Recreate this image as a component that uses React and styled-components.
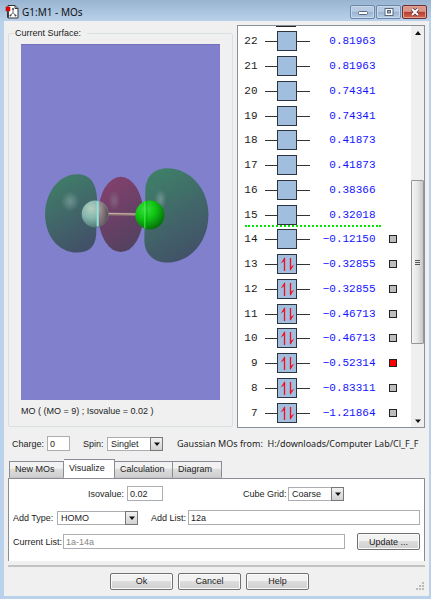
import React, { useState } from 'react';
import styled, { createGlobalStyle } from 'styled-components'

const GlobalStyle = createGlobalStyle`
  * { box-sizing:border-box; }
  body { margin:0; background:#b9d1ea; }
  body, button, input, select {
    font-family:"Liberation Sans", Arial, sans-serif;
    font-size:9px;
    line-height:12px;
    color:#1c1c1c;
  }
`

const Window = styled.div`
  min-height:100vh;
  display:flex;
  flex-direction:column;
  padding:0 2px 5px 4px;
  background:linear-gradient(#99b4d1, #b9d1ea 21px);
`

const TitleBar = styled.header`
  height:21px;
  display:flex;
  align-items:center;
  gap:3px;
  padding:2px 2px 0 1px;
  h1 {
    flex:1;
    margin:0;
    font:400 10px/14px "Noto Sans", "Open Sans", sans-serif;
    color:#111;
  }
`

const CaptionButton = styled.button`
  width:25px;
  height:14px;
  padding:0;
  display:flex;
  align-items:center;
  justify-content:center;
  border:1px solid ${({ $close }) => ($close ? '#6b2f38' : '#6d87a8')};
  border-radius:2px;
  box-shadow:inset 0 0 0 1px ${({ $close }) => ($close ? '#e2a093' : '#c9daec')};
  background:${({ $close }) => ($close
    ? 'linear-gradient(#d9978a 45%, #b9392a 50%, #cf6a50)'
    : 'linear-gradient(#b7cbe2 45%, #98b3d1 50%, #b3cae3)')};
`

const CaptionButtons = styled.div`
  display:flex;
  gap:1px;
`

const Body = styled.main`
  flex:1;
  display:flex;
  flex-direction:column;
  background:#f0f0f0;
  padding:4px 4px 6px;
`

const Top = styled.div`
  flex:1;
  display:grid;
  grid-template-columns:224fr 188fr;
  gap:4px;
`

const Surface = styled.fieldset`
  min-width:0;
  margin:2px 0 1px;
  padding:5px 12px 9px;
  display:flex;
  flex-direction:column;
  border:1px solid #d8e0e4;
  border-radius:2px;
  legend { padding:0 6px 0 1px; margin-left:-7px; }
  p { margin:5px 0 0; }
`

const Viewer = styled.svg`
  flex:1;
  width:100%;
  min-height:0;
  display:block;
  background:#8080cc;
  border-top:1px solid #7472b8;
`

const Diagram = styled.section`
  display:flex;
  border:1px solid #8a9099;
  background:#fff;
`

const Levels = styled.div`
  flex:1;
  display:flex;
  flex-direction:column;
  padding-bottom:2px;
`

const CutBox = styled.div`
  width:20px;
  height:1px;
  margin:0 0 2px 38px;
  background:#222;
`

const LevelList = styled.ul`
  flex:1;
  margin:0;
  padding:0;
  list-style:none;
  display:grid;
  grid-auto-rows:1fr;
`

const Level = styled.li`
  display:grid;
  grid-template-columns:20px 45px 59px 14px;
  column-gap:7px;
  align-items:center;
  position:relative;
  font:11px/14px "Liberation Mono", "Courier New", monospace;
  span { text-align:right; }
  output { color:#1414ff; text-align:right; white-space:pre; }
`

const FermiLine = styled.div`
  position:absolute;
  left:7px;
  bottom:0;
  width:136px;
  border-top:2px dotted #00e400;
`

const Marker = styled.input`
  appearance:none;
  justify-self:end;
  width:8px;
  height:8px;
  margin:0;
  border:1px solid #222;
  background:#bdbdbd;
  &:checked { background:#f00; }
`

const ScrollBar = styled.div`
  width:13px;
  display:flex;
  flex-direction:column;
  align-items:center;
  background:#efefef;
  padding:5px 0 4px;
`

const Track = styled.div`
  flex:1;
  width:100%;
  display:grid;
  grid-template-rows:141fr 161fr 72fr;
  margin:2px 0;
`

const Thumb = styled.div`
  grid-row:2;
  display:grid;
  place-items:center;
  border:1px solid #979797;
  border-radius:1px;
  background:linear-gradient(90deg, #f5f5f5, #e6e6e6 50%, #c6c6c8);
`

const Row = styled.div`
  display:flex;
  align-items:center;
  height:16px;
  padding-left:${({ $indent }) => $indent || 0}px;
  white-space:nowrap;
`

const ChargeRow = styled(Row)`
  margin-top:8px;
`

const Label = styled.label`
  margin:0 4px 0 ${({ $gap }) => $gap || 0}px;
  width:${({ $width }) => $width}px;
  flex:none;
`

const TextBox = styled.input`
  width:${({ $width }) => ($width ? `${$width}px` : 'auto')};
  flex:${({ $width }) => ($width ? 'none' : '1')};
  min-width:0;
  height:15px;
  padding:0 2px;
  border:1px solid #abadb3;
  border-radius:0;
  background:#fff;
  outline:none;
  &:disabled { color:#858585; }
`

const SelectBox = styled.span`
  display:inline-grid;
  width:${({ $width }) => $width}px;
  height:14px;
  > * { grid-area:1 / 1; }
  select {
    appearance:none;
    min-width:0;
    height:14px;
    padding:0 14px 1px 3px;
    border:1px solid #abadb3;
    border-radius:0;
    background:#fff;
    outline:none;
  }
`

const DropButton = styled.span`
  justify-self:end;
  width:13px;
  height:14px;
  display:grid;
  place-items:center;
  border:1px solid #777;
  background:linear-gradient(#f1f1f1, #d2d2d2);
  pointer-events:none;
`

const FilePath = styled.p`
  flex:1;
  min-width:0;
  margin:0 4px 0 14px;
  overflow:hidden;
  white-space:pre;
  font:9px/14px "Noto Sans", "Open Sans", sans-serif;
`

const Tabs = styled.div`
  display:flex;
  align-items:flex-end;
  height:19px;
  margin-top:7px;
  padding-left:1px;
`

const Tab = styled.button`
  width:${({ $width }) => $width}px;
  height:${({ $active }) => ($active ? 20 : 17)}px;
  margin-bottom:${({ $active }) => ($active ? -1 : 0)}px;
  padding:0 0 ${({ $active }) => ($active ? 2 : 0)}px 5px;
  text-align:left;
  border:1px solid #898c95;
  border-bottom:${({ $active }) => ($active ? 'none' : '1px solid #c6c6c6')};
  border-left-width:${({ $first }) => ($first ? 1 : 0)}px;
  background:${({ $active }) => ($active ? '#fff' : 'linear-gradient(#f2f2f2 40%, #dcdcdc 50%, #cfcfcf)')};
`

const Panel = styled.section`
  display:flex;
  flex-direction:column;
  gap:8px;
  padding:7px 4px 11px;
  border:1px solid #898c95;
  border-bottom:none;
  background:#fff;
`

const Button = styled.button`
  width:63px;
  height:17px;
  padding:0;
  flex:none;
  border:1px solid #707070;
  border-radius:2px;
  box-shadow:inset 0 0 0 1px #fbfbfb;
  background:linear-gradient(#f2f2f2 45%, #dddddd 50%, #cfcfcf);
`

const UpdateButton = styled(Button)`
  margin-left:12px;
`

const Footer = styled.footer`
  display:flex;
  align-items:center;
  justify-content:center;
  gap:5px;
  margin-top:4px;
  padding:6px 14px 0 0;
  border-top:2px solid #c3c3c3;
  position:relative;
`

const Grip = styled.svg`
  position:absolute;
  right:1px;
  bottom:0;
`

const levels = [
  { mo: 22, energy: '0.81963' },
  { mo: 21, energy: '0.81963' },
  { mo: 20, energy: '0.74341' },
  { mo: 19, energy: '0.74341' },
  { mo: 18, energy: '0.41873' },
  { mo: 17, energy: '0.41873' },
  { mo: 16, energy: '0.38366' },
  { mo: 15, energy: '0.32018', fermi: true },
  { mo: 14, energy: '−0.12150', surface: true },
  { mo: 13, energy: '−0.32855', surface: true, filled: true },
  { mo: 12, energy: '−0.32855', surface: true, filled: true },
  { mo: 11, energy: '−0.46713', surface: true, filled: true },
  { mo: 10, energy: '−0.46713', surface: true, filled: true },
  { mo: 9, energy: '−0.52314', surface: true, filled: true },
  { mo: 8, energy: '−0.83311', surface: true, filled: true },
  { mo: 7, energy: '−1.21864', surface: true, filled: true },
]

const tabs = [
  { name: 'New MOs', width: 55 },
  { name: 'Visualize', width: 51 },
  { name: 'Calculation', width: 58 },
  { name: 'Diagram', width: 49 },
]

const AppIcon = () => (
  <svg width="14" height="15" viewBox="0 0 14 15">
    <path d="M3 1.5h7l3 3v9.5H3z" fill="#fff" stroke="#333" />
    <path d="M10 1.5v3h3" fill="none" stroke="#333" />
    <path d="M8 5v3.5L5.5 11.5M8 8.5l2.5 3" fill="none" stroke="#666" />
    <circle cx="8" cy="5" r="1" fill="#444" />
    <circle cx="5.5" cy="11.5" r="1" fill="#444" />
    <circle cx="10.5" cy="11.5" r="1" fill="#444" />
    <rect x="1" y="3" width="4" height="4" fill="#e00" stroke="#900" strokeWidth=".5" />
    <path d="M3 7.5v6" stroke="#222" strokeWidth="1.5" />
  </svg>
)

const Arrow = ({ up }) => (
  <svg width="6" height="4" viewBox="0 0 6 4">
    <path d={up ? 'M0 4L3 0L6 4Z' : 'M0 0.5H6L3 4Z'} fill="#111" />
  </svg>
)

const Select = ({ id, width, options }) => (
  <SelectBox $width={width}>
    <select id={id}>
      {options.map(item => <option key={item}>{item}</option>)}
    </select>
    <DropButton><Arrow /></DropButton>
  </SelectBox>
)

const Orbital = ({ filled }) => (
  <svg width="45" height="20" viewBox="0 0 45 20">
    <path d="M0 10.5H12M32 10.5H45" stroke="#333" />
    <rect x="12.5" y=".5" width="19" height="19" fill="#a2bedf" stroke="#2c3440" />
    {filled && (
      <g stroke="#f01020" fill="#f01020">
        <path d="M19.5 17V4" strokeWidth="1.3" />
        <path d="M20 3L15.5 9.5L19.5 7Z" stroke="none" />
        <path d="M25.5 4V16" strokeWidth="1.3" />
        <path d="M25 17L29.5 10.5L25.5 13Z" stroke="none" />
      </g>
    )}
  </svg>
)

// two green lobes with the red one between the atoms
const Molecule = () => (
  <Viewer viewBox="21 45 198 354" role="img" aria-label="Molecular orbital 9">
    <defs>
      <linearGradient id="lobe" x1=".2" y1="0" x2=".6" y2="1">
        <stop offset="0" stopColor="#3f8068" />
        <stop offset=".45" stopColor="#416a69" />
        <stop offset="1" stopColor="#425168" />
      </linearGradient>
      <linearGradient id="redLobe" x1=".2" y1="0" x2=".6" y2="1">
        <stop offset="0" stopColor="#84406e" />
        <stop offset="1" stopColor="#53415f" />
      </linearGradient>
      <radialGradient id="shine">
        <stop offset="0" stopColor="#b4c8c8" stopOpacity=".4" />
        <stop offset="1" stopColor="#b4c8c8" stopOpacity="0" />
      </radialGradient>
      <radialGradient id="fluorine" cx=".35" cy=".3" r=".75">
        <stop offset="0" stopColor="#b5cdbf" />
        <stop offset=".5" stopColor="#83b5ac" />
        <stop offset="1" stopColor="#4c716f" />
      </radialGradient>
      <radialGradient id="fluorineShade" cx=".1" cy=".3" r="1">
        <stop offset="0" stopColor="#a99a9c" />
        <stop offset="1" stopColor="#554650" />
      </radialGradient>
      <radialGradient id="chlorine" cx=".35" cy=".3" r=".75">
        <stop offset="0" stopColor="#3bde42" />
        <stop offset=".45" stopColor="#0fc512" />
        <stop offset="1" stopColor="#056b0b" />
      </radialGradient>
    </defs>
    <path d="M77 174C91 174 97 184 97 204L96 234C95 247 88 252 77 252C58 252 45 235 45 214C45 192 59 174 77 174Z" fill="url(#lobe)" />
    <ellipse cx="120.5" cy="214" rx="22.5" ry="37.5" fill="url(#redLobe)" />
    <path d="M167 168C190 168 208 189 208 214C208 242 189 262 167 262C152 262 144 252 144 240L145 191C145 177 153 168 167 168Z" fill="url(#lobe)" />
    <ellipse cx="70" cy="201" rx="9" ry="10" fill="url(#shine)" />
    <ellipse cx="114" cy="200" rx="6" ry="10" fill="url(#shine)" opacity=".6" />
    <ellipse cx="160" cy="199" rx="6" ry="10" fill="url(#shine)" />
    <path d="M107 213.5L136 214" stroke="#8b6c70" strokeWidth="3" />
    <path d="M107 213L136 213.5" stroke="#cfb8ac" />
    <circle cx="95" cy="213.500" r="13.500" fill="url(#fluorine)" />
    <path d="M98 200.500A13.500 13.500 0 0 1 98 226.500Z" fill="url(#fluorineShade)" />
    <path d="M97.5 201V226" stroke="#90e4dc" strokeWidth="2" />
    <circle cx="149.5" cy="214.5" r="14.5" fill="url(#chlorine)" />
    <path d="M144.5 201V228" stroke="#3cf04a" strokeWidth="1" />
    <path d="M146.5 201V228" stroke="#0a8a14" strokeWidth="1" opacity=".5" />
  </Viewer>
)

const App = () => {
  const [active, setActive] = useState('Visualize')
  const [shown, setShown] = useState(9)

  return (
    <>
      <GlobalStyle />
      <Window>
        <TitleBar>
          <AppIcon />
          <h1>G1:M1 - MOs</h1>
          <CaptionButtons>
            <CaptionButton aria-label="Minimize">
              <svg width="10" height="8"><rect x=".5" y="3.5" width="9" height="3" rx="1" fill="#fff" stroke="#56677d" /></svg>
            </CaptionButton>
            <CaptionButton aria-label="Maximize">
              <svg width="10" height="8">
                <rect x="1" y=".5" width="8" height="7" fill="#fff" stroke="#56677d" />
                <rect x="3.5" y="2.5" width="3" height="2.5" fill="#9db3cc" stroke="#56677d" />
              </svg>
            </CaptionButton>
            <CaptionButton aria-label="Close" $close>
              <svg width="10" height="8">
                <path d="M2 1L8 7M8 1L2 7" stroke="#5d3038" strokeWidth="3.5" />
                <path d="M2 1L8 7M8 1L2 7" stroke="#fff" strokeWidth="2" />
              </svg>
            </CaptionButton>
          </CaptionButtons>
        </TitleBar>

        <Body>
          <Top>
            <Surface>
              <legend>Current Surface:</legend>
              <Molecule />
              <p>MO ( (MO = 9) ; Isovalue = 0.02 )</p>
            </Surface>

            <Diagram>
              <Levels>
                <CutBox />
                <LevelList>
                  {levels.map(({ mo, energy, filled, surface, fermi }) => (
                    <Level key={mo}>
                      <span>{mo}</span>
                      <Orbital filled={filled} />
                      <output>{energy}</output>
                      {surface && (
                        <Marker
                          type="checkbox"
                          aria-label={`MO ${mo}`}
                          checked={shown === mo}
                          onChange={() => setShown(mo)}
                        />
                      )}
                      {fermi && <FermiLine />}
                    </Level>
                  ))}
                </LevelList>
              </Levels>
              <ScrollBar>
                <Arrow up />
                <Track>
                  <Thumb>
                    <svg width="5" height="7"><path d="M0 1.5H5M0 3.5H5M0 5.5H5" stroke="#555" /></svg>
                  </Thumb>
                </Track>
                <Arrow />
              </ScrollBar>
            </Diagram>
          </Top>

          <ChargeRow $indent={4}>
            <Label htmlFor="charge" $width={31}>Charge:</Label>
            <TextBox id="charge" $width={23} defaultValue="0" />
            <Label htmlFor="spin" $width={20} $gap={13}>Spin:</Label>
            <Select id="spin" width={56} options={['Singlet', 'Triplet']} />
            <FilePath>{'Gaussian MOs from:  H:/downloads/Computer Lab/Cl_F_F'}</FilePath>
          </ChargeRow>

          <Tabs role="tablist">
            {tabs.map(({ name, width }, i) => (
              <Tab
                key={name}
                role="tab"
                aria-selected={active === name}
                $width={width}
                $first={i === 0}
                $active={active === name}
                onClick={() => setActive(name)}
              >
                {name}
              </Tab>
            ))}
          </Tabs>
          <Panel>
            <Row $indent={75}>
              <Label htmlFor="isovalue" $width={35}>Isovalue:</Label>
              <TextBox id="isovalue" $width={36} defaultValue="0.02" />
              <Label htmlFor="grid" $width={41} $gap={80}>Cube Grid:</Label>
              <Select id="grid" width={56} options={['Coarse', 'Medium', 'Fine']} />
            </Row>
            <Row>
              <Label htmlFor="type" $width={40}>Add Type:</Label>
              <Select id="type" width={81} options={['HOMO', 'LUMO']} />
              <Label htmlFor="add" $width={33} $gap={13}>Add List:</Label>
              <TextBox id="add" defaultValue="12a" />
            </Row>
            <Row>
              <Label htmlFor="current" $width={46}>Current List:</Label>
              <TextBox id="current" defaultValue="1a-14a" disabled />
              <UpdateButton>Update ...</UpdateButton>
            </Row>
          </Panel>

          <Footer>
            <Button>Ok</Button>
            <Button>Cancel</Button>
            <Button>Help</Button>
            <Grip width="8" height="8">
              <path d="M6 0h2v2h-2zM3 3h2v2h-2zM6 3h2v2h-2zM0 6h2v2h-2zM3 6h2v2h-2zM6 6h2v2h-2z" fill="#bcbcbc" />
            </Grip>
          </Footer>
        </Body>
      </Window>
    </>
  );
};

export default App;
